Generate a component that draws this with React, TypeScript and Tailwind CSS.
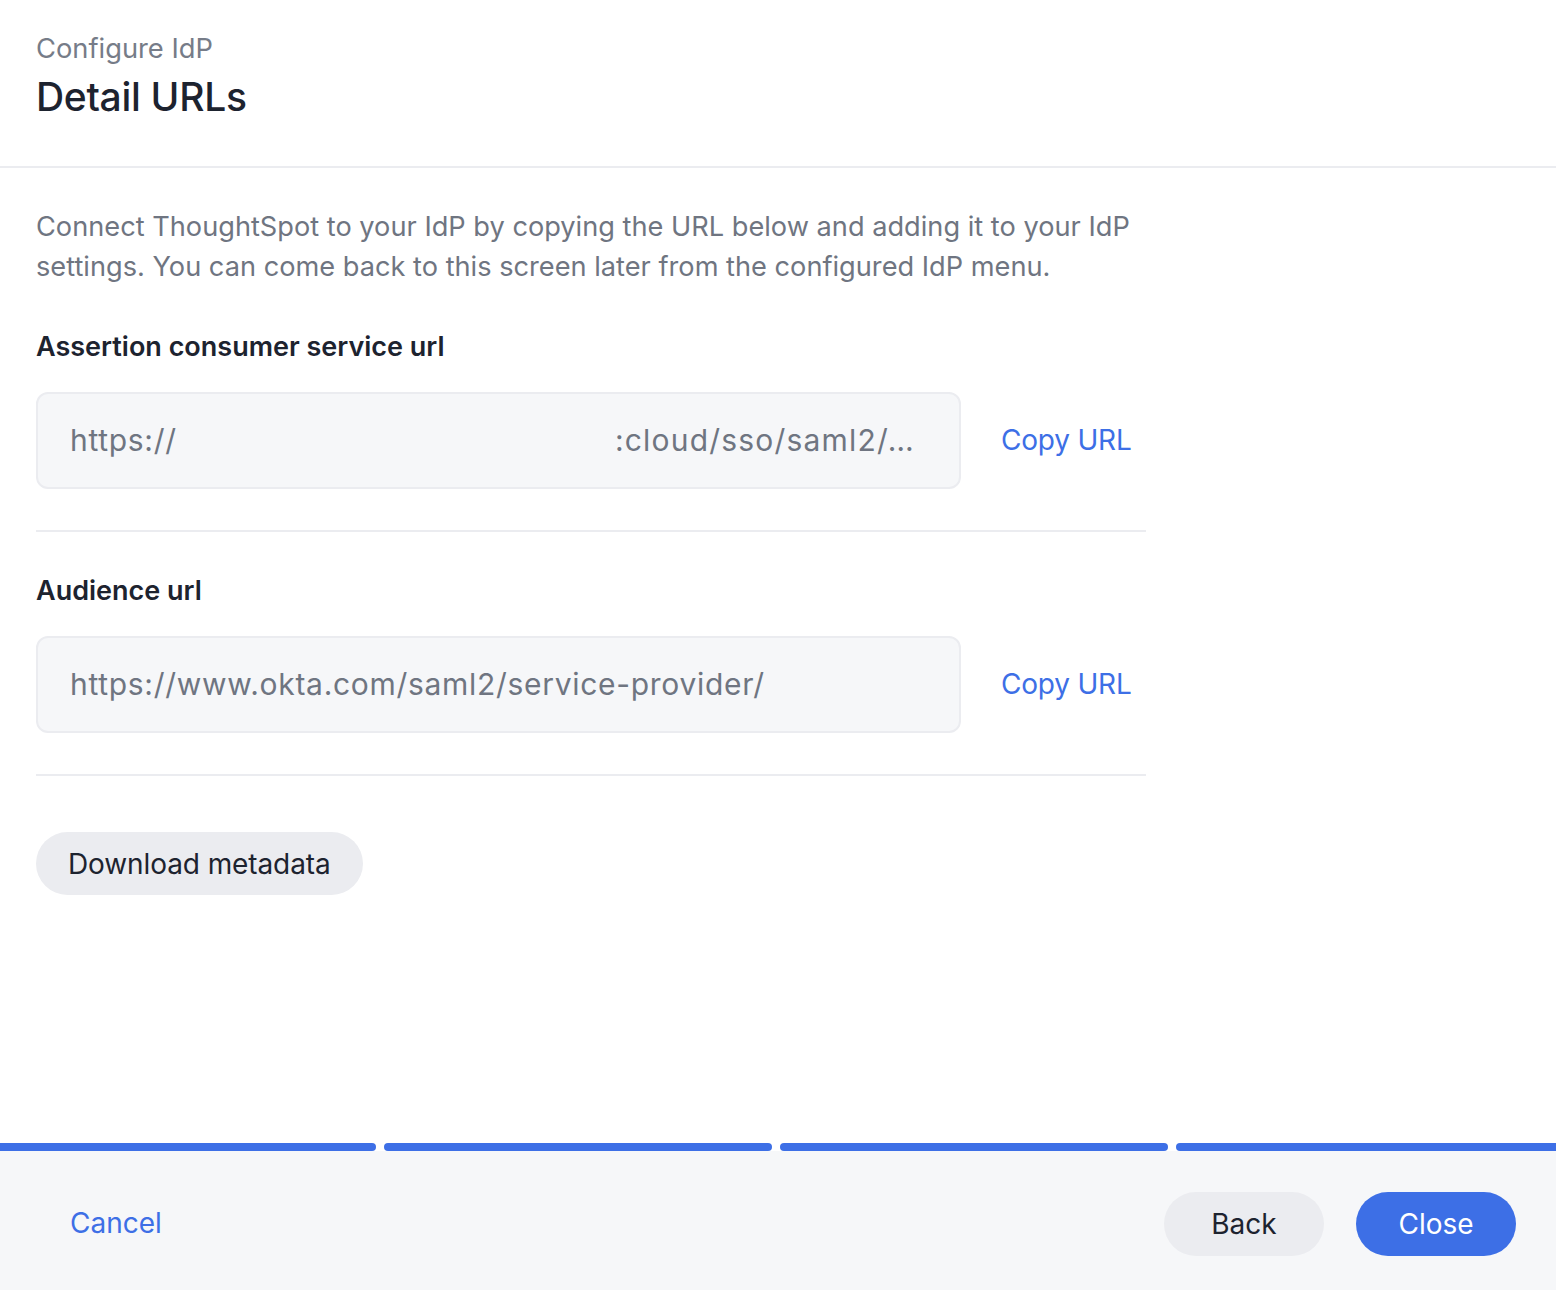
import React from "react";

const font = { fontFamily: "Inter, 'Noto Sans', sans-serif" };

function UrlField({ children }: { children: React.ReactNode }) {
  return (
    <div className="flex items-center">
      <div className="flex h-[97px] w-[925px] items-center overflow-hidden rounded-[12px] border-2 border-[#ebecf0] bg-[#f6f7f9] pl-[32px] pr-[44px] text-[30px] tracking-[0.7px] text-[#6f7581]">
        {children}
      </div>
      <button className="ml-[40px] -mt-[1px] text-[28px] tracking-[-0.2px] text-[#3d6fe6]">Copy URL</button>
    </div>
  );
}

export default function App() {
  return (
    <div className="flex h-[1290px] w-full flex-col bg-white" style={font}>
      {/* header */}
      <div className="border-b-2 border-[#ebecf0] px-9 pb-[41px] pt-[30px]">
        <div className="text-[27.3px] leading-[38px] text-[#767c88]">Configure IdP</div>
        <h1 className="mt-[1px] text-[39px] font-medium leading-[56px] tracking-[-0.3px] text-[#1d232f]">
          Detail URLs
        </h1>
      </div>

      {/* body */}
      <div className="px-9 pt-[39px]">
        <p className="w-[1110px] text-[27.2px] leading-[40px] text-[#6f7581]">
          Connect ThoughtSpot to your IdP by copying the URL below and adding it to your IdP
          settings. You can come back to this screen later from the configured IdP menu.
        </p>

        <div className="w-[1110px]">
          <div className="mt-[40px] text-[27px] font-semibold leading-[40px] text-[#1d232f]">
            Assertion consumer service url
          </div>
          <div className="mt-[25px]">
            <UrlField>
              <span>https://</span>
              <span className="flex-1" />
              <span className="whitespace-nowrap tracking-[1.2px]">:cloud/sso/saml2/…</span>
            </UrlField>
          </div>
          <div className="mt-[41px] h-[2px] bg-[#ebecf0]" />

          <div className="mt-[39px] text-[27px] font-semibold leading-[40px] text-[#1d232f]">
            Audience url
          </div>
          <div className="mt-[25px]">
            <UrlField>
              <span className="whitespace-nowrap">https://www.okta.com/saml2/service-provider/</span>
            </UrlField>
          </div>
          <div className="mt-[41px] h-[2px] bg-[#ebecf0]" />
        </div>

        <button className="mt-[56px] h-[63px] rounded-full bg-[#ebecf0] px-[32px] text-[28px] tracking-[-0.1px] text-[#1d232f]">
          Download metadata
        </button>
      </div>

      {/* footer */}
      <div className="mt-auto">
        <div className="flex h-[8px] gap-[8px] bg-white">
          <div className="h-full w-[376px] rounded-r-full bg-[#3d6fe6]" />
          <div className="h-full w-[388px] rounded-full bg-[#3d6fe6]" />
          <div className="h-full w-[388px] rounded-full bg-[#3d6fe6]" />
          <div className="h-full flex-1 rounded-l-full bg-[#3d6fe6]" />
        </div>
        <div className="flex h-[139px] items-center bg-[#f6f7f9] pl-[70px] pr-[40px] pt-[7px]">
          <button className="-mt-[3px] text-[28px] text-[#3d6fe6]">Cancel</button>
          <div className="flex-1" />
          <button className="h-[64px] w-[160px] rounded-full bg-[#ebecf0] text-[28px] text-[#1d232f]">
            Back
          </button>
          <button className="ml-[32px] h-[64px] w-[160px] rounded-full bg-[#3d6fe6] text-[28px] text-white">
            Close
          </button>
        </div>
      </div>
    </div>
  );
}
